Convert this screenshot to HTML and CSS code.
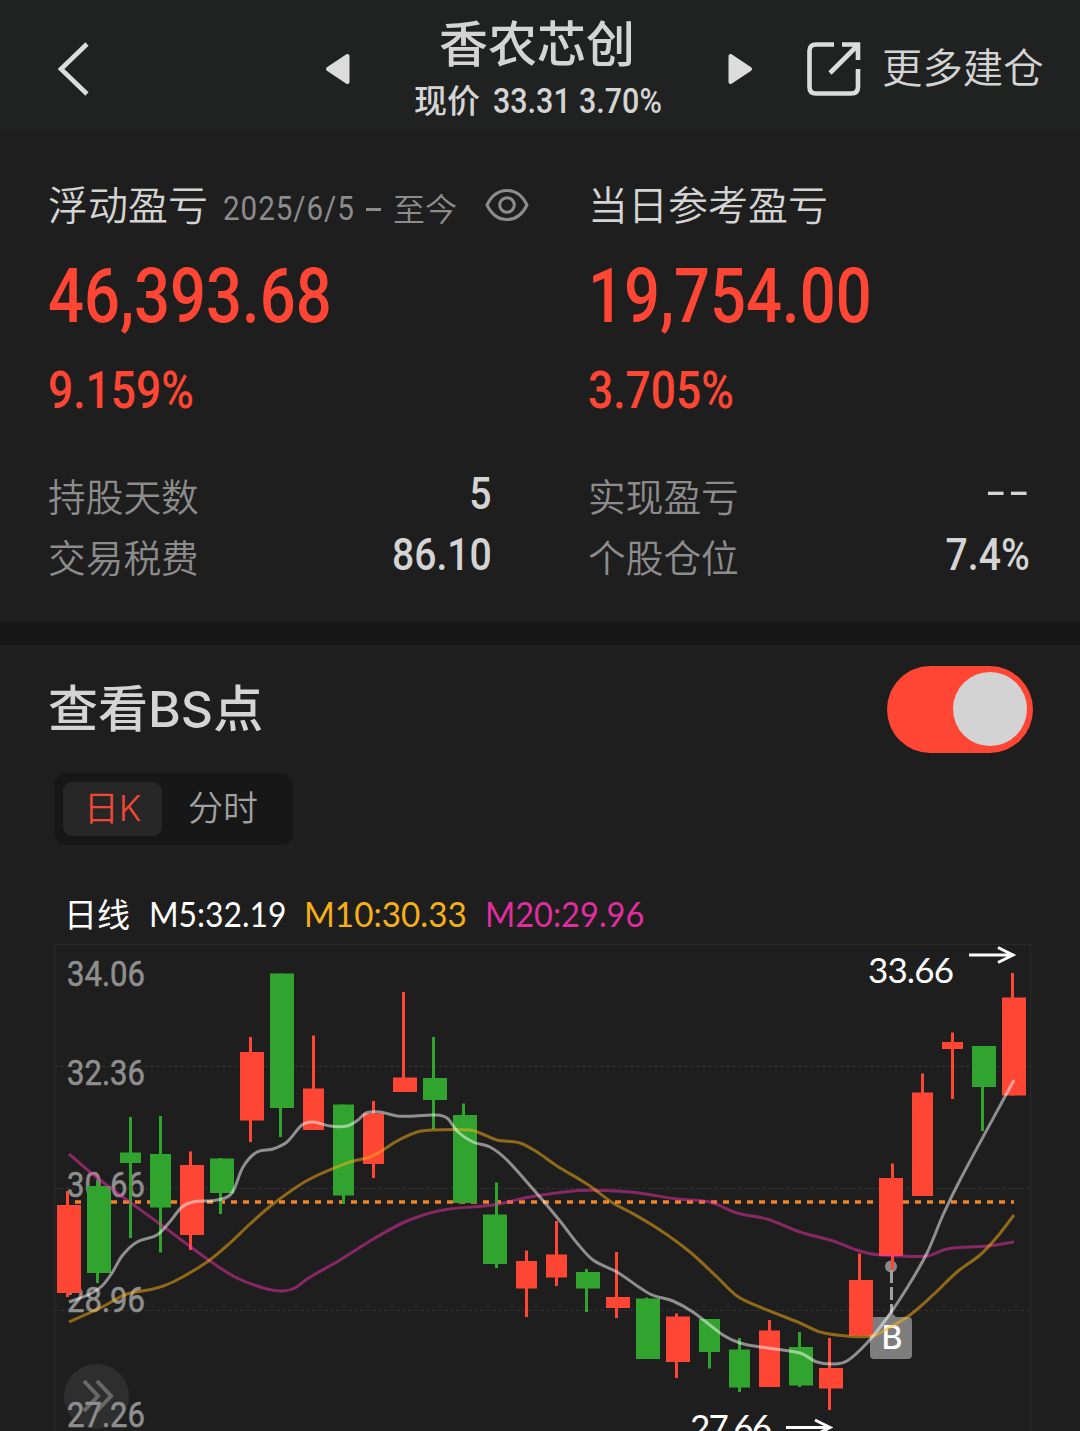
FILE: index.html
```html
<!DOCTYPE html>
<html lang="zh-CN">
<head>
    <meta charset="UTF-8">
    <meta name="viewport" content="width=device-width, initial-scale=1.0">
    <title>香农芯创</title>
    <link rel="stylesheet" href="styles.css">
</head>
<body>
    <header class="header">
        <svg class="back" width="34" height="56" viewBox="0 0 34 56">
            <path d="M31 3L5 28L31 53" fill="none" stroke="#dcdcdc" stroke-width="4.6"/>
        </svg>
        <div class="stock">
            <svg width="26" height="32" viewBox="0 0 26 32">
                <path d="M3 16L22.5 3V29Z" fill="#dcdcdc" stroke="#dcdcdc" stroke-width="4" stroke-linejoin="round"/>
            </svg>
            <div class="stock-name">
                <h1>香农芯创</h1>
                <p><span>现价</span><span class="num price">33.31</span><span class="num rate">3.70%</span></p>
            </div>
            <svg width="26" height="32" viewBox="0 0 26 32">
                <path d="M23 16L3.5 3V29Z" fill="#dcdcdc" stroke="#dcdcdc" stroke-width="4" stroke-linejoin="round"/>
            </svg>
        </div>
        <div class="more">
            <svg width="54" height="56" viewBox="0 0 54 56">
                <g fill="none" stroke="#dcdcdc" stroke-width="4.6">
                    <path d="M27 3.5H9Q2.5 3.5 2.5 10V46Q2.5 52.5 9 52.5H44Q51 52.5 51 46V28"/>
                    <path d="M35 3.5H51V19M50 5L23 32"/>
                </g>
            </svg>
            <span>更多建仓</span>
        </div>
    </header>

    <section class="stats">
        <div class="stat">
            <div class="stat-label">
                <span>浮动盈亏</span>
                <span class="num date">2025/6/5</span>
                <i class="dash"></i>
                <span class="today">至今</span>
                <svg class="eye" width="44" height="34" viewBox="0 0 44 34">
                    <g fill="none" stroke="#8c8c8c" stroke-width="3">
                        <path d="M2 17Q9 2.500 22 2.500T42 17Q35 31.500 22 31.500T2 17Z"/>
                        <circle cx="22" cy="17" r="7.300"/>
                    </g>
                </svg>
            </div>
            <div class="num amount">46,393.68</div>
            <div class="num percent">9.159%</div>
            <div class="row"><span>持股天数</span><b class="num">5</b></div>
            <div class="row"><span>交易税费</span><b class="num">86.10</b></div>
        </div>
        <div class="stat">
            <div class="stat-label"><span>当日参考盈亏</span></div>
            <div class="num amount">19,754.00</div>
            <div class="num percent">3.705%</div>
            <div class="row"><span>实现盈亏</span><b class="num empty">--</b></div>
            <div class="row"><span>个股仓位</span><b class="num">7.4%</b></div>
        </div>
    </section>

    <section class="bs">
        <div class="bs-head">
            <h2>查看BS点</h2>
            <div class="toggle"><div class="knob"></div></div>
        </div>
        <div class="tabs">
            <div class="tab active">日K</div>
            <div class="tab">分时</div>
        </div>
        <div class="legend">
            <span class="line-name">日线</span>
            <span class="ma m5">M5:32.19</span>
            <span class="ma m10">M10:30.33</span>
            <span class="ma m20">M20:29.96</span>
        </div>
        <svg class="chart" id="chart" width="1080" height="487" viewBox="0 944 1080 487">
            <path class="frame" d="M54.500 1431V944.500H1030.500V1431"/>
            <path class="grid" d="M54 1066.500H1030M54 1188.500H1030M54 1310.500H1030"/>
            <circle cx="96.500" cy="1396.500" r="32.500" fill="#2e2e2e"/>
            <path d="M84 1381L98 1396L84 1411M97 1381L111 1396L97 1411" fill="none" stroke="#686868" stroke-width="4"/>
            <g class="axis">
                <text x="67" y="986" textLength="78" lengthAdjust="spacingAndGlyphs">34.06</text>
                <text x="67" y="1085" textLength="78" lengthAdjust="spacingAndGlyphs">32.36</text>
                <text x="67" y="1197" textLength="78" lengthAdjust="spacingAndGlyphs">30.66</text>
                <text x="67" y="1312" textLength="78" lengthAdjust="spacingAndGlyphs">28.96</text>
                <text x="67" y="1427" textLength="78" lengthAdjust="spacingAndGlyphs">27.26</text>
            </g>
            <path class="cost" d="M69 1202H1014"/>
            <!-- buy marker -->
            <g>
                <circle cx="891" cy="1266.500" r="6" fill="#888"/>
                <path d="M891.500 1270V1313" stroke="#a0a0a0" stroke-width="3" stroke-dasharray="13 4"/>
                <path d="M885 1318L891 1312L897 1318Z" fill="#7d7d7d"/>
                <rect x="870" y="1317" width="42" height="42" rx="4" fill="#7d7d7d"/>
                <text class="buy" x="892" y="1349">B</text>
            </g>
            <g id="candles"></g>
            <g id="lines"></g>
            <g class="mark">
                <text x="868" y="983" textLength="86">33.66</text>
                <path d="M969 955H1012M998 947.500L1013 955L998 962.500"/>
                <text x="690" y="1440" textLength="82">27.66</text>
                <path d="M786 1427.500H829M815 1420L830 1427.500L815 1435"/>
            </g>
        </svg>
    </section>

    <script>
        const NS = 'http://www.w3.org/2000/svg';
        const RED = '#ff4634';
        const GREEN = '#30a42f';

        // [color, body x, body width, wick x, high, body top, body bottom, low]
        const candles = [
            [RED, 57, 24, 66, 1191, 1205, 1293, 1297],
            [GREEN, 87, 24, 96, 1180, 1186, 1273, 1283],
            [GREEN, 120, 21, 129, 1117, 1152.5, 1163, 1238],
            [GREEN, 150, 21, 159, 1116, 1154, 1207.5, 1252.5],
            [RED, 180, 24, 189, 1151.5, 1165, 1235, 1250],
            [GREEN, 210, 24, 219, 1158, 1158.5, 1193, 1214],
            [RED, 240, 24, 249, 1037, 1052, 1120.5, 1142],
            [GREEN, 270, 24, 279, 973.5, 973.5, 1108, 1137],
            [RED, 303, 21, 312, 1035.5, 1088.5, 1130, 1130],
            [GREEN, 333, 21, 342, 1104.5, 1104.5, 1195.5, 1204],
            [RED, 363, 21, 372, 1101, 1113.5, 1164, 1178],
            [RED, 393, 24, 402, 992, 1077.5, 1092, 1092],
            [GREEN, 423, 24, 432, 1037, 1078, 1100, 1129],
            [GREEN, 453, 24, 462, 1103.5, 1115, 1203, 1203],
            [GREEN, 483, 24, 495, 1182.5, 1214.5, 1264, 1268],
            [RED, 516, 21, 525, 1250.5, 1261, 1288.5, 1317],
            [RED, 546, 21, 555, 1221, 1254.5, 1277.5, 1286],
            [GREEN, 576, 24, 585, 1269, 1272, 1288.5, 1312],
            [RED, 606, 24, 615, 1252, 1297, 1308, 1318],
            [GREEN, 636, 24, 645, 1297.5, 1298.5, 1359, 1359],
            [RED, 666, 24, 675, 1313.5, 1316.5, 1362, 1378],
            [GREEN, 699, 21, 708, 1319, 1319, 1352, 1368.5],
            [GREEN, 729, 21, 738, 1338, 1349.5, 1387.5, 1392],
            [RED, 759, 21, 768, 1320, 1330.5, 1387, 1387],
            [GREEN, 789, 24, 798, 1332, 1347, 1385.5, 1387],
            [RED, 819, 24, 828, 1338, 1368, 1388.5, 1410],
            [RED, 849, 24, 858, 1253.5, 1280, 1335.5, 1335.5],
            [RED, 879, 24, 891, 1163.5, 1178, 1256, 1270],
            [RED, 912, 21, 921, 1073.5, 1092.5, 1196, 1196],
            [RED, 942, 21, 951, 1032.5, 1042, 1049, 1099],
            [GREEN, 972, 24, 981, 1046, 1046, 1087, 1131],
            [RED, 1002, 24, 1011, 973, 997.5, 1095.5, 1095.5]
        ];

        const averages = {
            'ma20': [[69,1154],[100,1180],[160,1224],[210,1261],[237,1278],[267,1289],[283,1291],[295,1288],[307,1279],[340,1260],[375,1238],[407,1221],[443,1210],[493,1205],[530,1197],[580,1190.5],[630,1192],[677,1199],[710,1202],[737,1213],[767,1219],[800,1232],[833,1241],[860,1251],[880,1255],[927,1256],[947,1249],[987,1246],[1014,1242]],
            'ma10': [[69,1322],[100,1308],[127,1294],[153,1289],[173,1282],[207,1262],[230,1243],[250,1224],[273,1204],[308,1180],[350,1162],[370,1157],[383,1150],[397,1141],[417,1132],[433,1130],[470,1130],[480,1133],[497,1140],[520,1143],[537,1152],[557,1166],[587,1184],[613,1203],[630,1212],[660,1230],[690,1252],[717,1277],[737,1296],[760,1307],[800,1323],[820,1332],[847,1336],[873,1336],[887,1329],[910,1315],[933,1295],[957,1272],[980,1255],[997,1237],[1014,1215]],
            'ma5': [[69,1302],[90,1294],[102,1286],[112,1273],[122,1256],[137,1242],[157,1235],[168,1224],[182,1207],[193,1202],[217,1200],[232,1193],[243,1167],[257,1152],[273,1149],[287,1142],[302,1125],[313,1122],[330,1126],[347,1126],[358,1120],[366,1113],[380,1112],[397,1116],[415,1116],[434,1115],[447,1118],[458,1132],[473,1142],[490,1147],[507,1160],[533,1189],[560,1221],[577,1243],[593,1260],[617,1272],[650,1294],[673,1301],[693,1312],[723,1335],[740,1343],[760,1347],[800,1353],[817,1362],[833,1364],[847,1361],[867,1343],[887,1318],[907,1288],[927,1253],[943,1215],[960,1180],[1014,1080]]
        };

        function addShape(parent, tag, attrs) {
            const el = document.createElementNS(NS, tag);
            for (const key in attrs) {
                el.setAttribute(key, attrs[key]);
            }
            document.getElementById(parent).appendChild(el);
        }

        // Smooth curve through all points
        function smoothPath(p) {
            let d = `M${p[0]}`;
            for (let i = 0; i < p.length - 1; i++) {
                const a = p[i - 1] || p[i];
                const b = p[i];
                const c = p[i + 1];
                const e = p[i + 2] || c;
                const h = (c[0] - b[0]) / 3;
                const m1 = (c[1] - a[1]) / (c[0] - a[0]);
                const m2 = (e[1] - b[1]) / (e[0] - b[0]);
                d += `C${b[0] + h},${b[1] + h * m1} ${c[0] - h},${c[1] - h * m2} ${c}`;
            }
            return d;
        }

        candles.forEach(([fill, x, width, wick, high, top, bottom, low]) => {
            addShape('candles', 'rect', { x: wick, y: high, width: 3, height: low - high, fill });
            addShape('candles', 'rect', { x, y: top, width, height: bottom - top, fill });
        });

        for (const name in averages) {
            addShape('lines', 'path', { class: name, d: smoothPath(averages[name]) });
        }
    </script>
</body>
</html>
```
FILE: styles.css
```css
* {
    box-sizing: border-box;
}

body {
    margin: 0;
    width: 1080px;
    height: 1431px;
    overflow: hidden;
    background-color: #1e1e1e;
    color: #d4d4d4;
    font-family: Lato, "Noto Sans CJK SC", sans-serif;
}

h1, h2, p {
    margin: 0;
    font-weight: 500;
}

svg {
    display: block;
    flex: none;
}

/* Narrow digits */
.num {
    display: inline-block;
    font-family: Roboto, sans-serif;
    font-weight: 500;
    white-space: nowrap;
    transform: scaleX(0.87);
    transform-origin: left center;
}

/* Header */
.header {
    display: grid;
    grid-template-columns: 325px 428px 1fr;
    align-items: center;
    height: 132px;
    padding-top: 6px;
    background-color: #202221;
}

.back {
    margin-left: 56px;
}

.stock {
    display: flex;
    align-items: center;
    justify-content: space-between;
}

.stock-name {
    width: 250px;
    height: 126px;
    margin-top: -6px;
}

.stock-name h1 {
    padding-left: 25px;
    margin-top: 4px;
    font-size: 49px;
    line-height: 72px;
    white-space: nowrap;
}

.stock-name p {
    display: flex;
    font-size: 33px;
    line-height: 44px;
    margin-top: -1px;
    white-space: nowrap;
}

.price {
    width: 86px;
    margin-left: 13px;
}

.stock-name .num {
    font-size: 35px;
    line-height: 47px;
}

.more {
    display: flex;
    align-items: center;
    gap: 21px;
    margin-left: 54px;
    font-size: 40.4px;
    font-weight: 350;
    white-space: nowrap;
}

.more span {
    margin-top: -7px;
}

/* Profit and loss */
.stats {
    display: grid;
    grid-template-columns: 540px 540px;
    height: 490px;
    padding-top: 48px;
}

.stat {
    padding: 0 50px 0 48px;
}

.stat:first-child {
    padding-right: 48px;
}

.stat-label {
    display: flex;
    align-items: center;
    height: 50px;
    font-size: 40px;
    font-weight: 350;
    white-space: nowrap;
}

.stat-label span {
    flex: none;
}

.stat-label span:first-child {
    margin-top: -5px;
}

.stat-label .date {
    width: 141px;
    margin: 6px 0 0 15px;
    font-size: 34px;
    font-weight: 400;
    color: #8c8c8c;
    letter-spacing: 1.1px;
}

.dash {
    flex: none;
    width: 15px;
    height: 3px;
    margin: 8px 12px 0 2px;
    background-color: #8c8c8c;
}

.stat-label .today {
    width: 64px;
    margin-top: 3px;
    font-size: 32px;
    color: #8c8c8c;
}

.eye {
    margin-left: 28px;
}

.amount {
    display: block;
    height: 90px;
    margin-top: 21px;
    font-size: 76px;
    line-height: 90px;
    color: #ff4634;
    transform: scaleX(0.833);
}

.percent {
    display: block;
    height: 60px;
    margin: 19px 0 47px;
    font-size: 51px;
    line-height: 61px;
    color: #ff4634;
}

.row {
    display: flex;
    justify-content: space-between;
    height: 60.5px;
    font-size: 37.7px;
    font-weight: 350;
    line-height: 60px;
    color: #8c8c8c;
}

.row .num {
    height: 52px;
    font-size: 45px;
    line-height: 53px;
    color: #d4d4d4;
    transform-origin: right center;
}

.row .empty {
    margin-right: -3px;
    font-weight: 400;
    letter-spacing: 3.5px;
    line-height: 50px;
    transform: scaleX(1.45);
}

/* BS points */
.bs {
    border-top: 23px solid #171717;
}

.bs-head {
    display: flex;
    justify-content: space-between;
    height: 108px;
    padding: 21px 47px 0 48px;
}

.bs-head h2 {
    font-family: Inter, "Noto Sans CJK SC", sans-serif;
    font-size: 50px;
    line-height: 86px;
}

.toggle {
    display: flex;
    justify-content: flex-end;
    align-items: center;
    width: 146px;
    height: 87px;
    padding: 0 6px 1px;
    border-radius: 44px;
    background-color: #ff4634;
}

.knob {
    width: 74px;
    height: 74px;
    border-radius: 50%;
    background-color: #d3d3d3;
}

.tabs {
    display: flex;
    width: 239px;
    height: 72px;
    margin: 20px 0 0 54px;
    padding: 9px;
    border-radius: 13px;
    background-color: #171717;
}

.tab {
    width: 122px;
    font-family: Inter, "Noto Sans CJK SC", sans-serif;
    font-size: 35px;
    font-weight: 350;
    line-height: 53px;
    text-align: center;
    color: #a0a0a0;
}

.tab.active {
    width: 99px;
    border-radius: 9px;
    background-color: #262626;
    color: #f04837;
}

.legend {
    display: flex;
    height: 99px;
    padding: 45px 0 0 64px;
    font-size: 35px;
    line-height: 48px;
    white-space: nowrap;
}

.line-name {
    width: 85px;
    font-size: 33px;
    color: #fff;
}

.ma {
    line-height: 47px;
    transform: scaleX(0.93);
    transform-origin: left center;
}

.m5 {
    width: 155px;
    color: #fff;
    transform: scaleX(0.91);
}

.m10 {
    width: 181px;
    color: #f5af19;
    transform: scaleX(0.95);
}

.m20 {
    color: #e02d9f;
}

/* Chart */
.frame, .grid {
    fill: none;
    stroke: #2b2b2b;
}

.grid {
    stroke: #303030;
    stroke-dasharray: 4 2;
}

.axis {
    font: 400 34.5px Roboto, sans-serif;
    fill: #8e8e8e;
}

.axis text {
    stroke: #8e8e8e;
    stroke-width: 0.6;
}

.cost {
    stroke: #f08228;
    stroke-width: 3.5;
    stroke-dasharray: 6 6;
    stroke-dashoffset: 6;
}

.buy {
    font: 500 32px Inter, sans-serif;
    text-anchor: middle;
    fill: #fff;
}

.ma5, .ma10, .ma20 {
    fill: none;
    stroke-width: 3;
    stroke-opacity: 0.5;
}

.ma5 {
    stroke: #fff;
}

.ma10 {
    stroke: #ffb414;
}

.ma20 {
    stroke: #f032aa;
}

.mark {
    font: 400 35px Lato, sans-serif;
    fill: #fff;
}

.mark path {
    fill: none;
    stroke: #fff;
    stroke-width: 3;
}
```
